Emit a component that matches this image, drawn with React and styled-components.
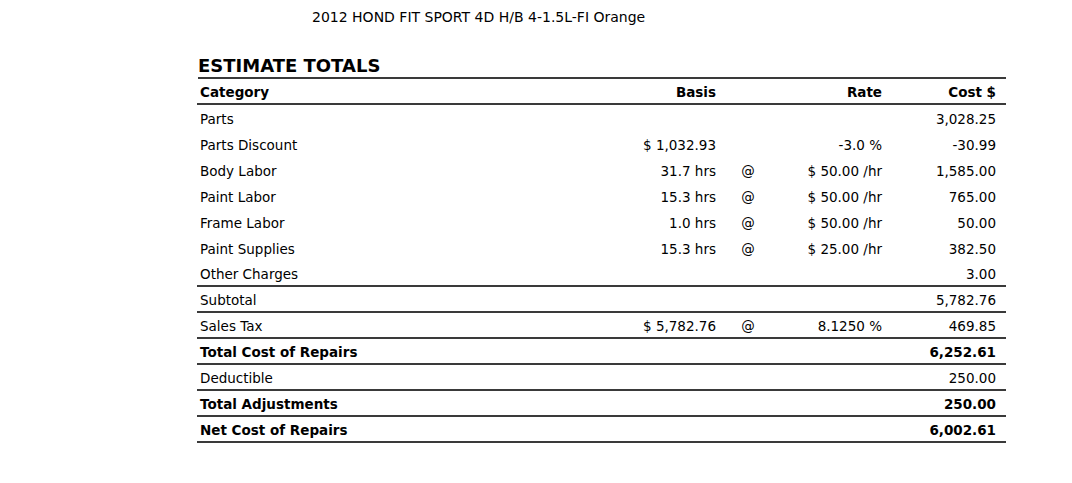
import React from "react";
import styled, { createGlobalStyle } from "styled-components";

const Global = createGlobalStyle`
  html, body { margin: 0; padding: 0; background: #fff; }
  body { font-family: "DejaVu Sans", Verdana, sans-serif; color: #000; }
`;

const Page = styled.div`
  width: 1072px;
  height: 483px;
  display: flex;
  flex-direction: column;
  background: #fff;
`;

const Vehicle = styled.div`
  margin: 9px 0 0 312px;
  font-size: 14px;
  line-height: 17px;
`;

const Section = styled.section`
  margin: 29px 0 0 197px;
  width: 809px;
`;

const Heading = styled.h2`
  margin: 0 0 0 1px;
  font-size: 18px;
  font-weight: bold;
  line-height: 22px;
  padding-bottom: 0;
  border-bottom: 2px solid #3a3a3a;
`;

const Row = styled.div`
  display: grid;
  grid-template-columns: 1fr 100px 64px 102px 114px 10px;
  align-items: center;
  height: 26px;
  padding-top: 2px;
  box-sizing: border-box;
  font-size: 13.5px;
  font-weight: ${(p) => (p.$bold ? "bold" : "normal")};
  border-bottom: ${(p) => (p.$line ? "2px solid #3a3a3a" : "0")};
`;

const Cell = styled.div`
  text-align: ${(p) => p.$align || "left"};
  padding-left: ${(p) => (p.$first ? "3px" : "0")};
  white-space: nowrap;
`;

const rows = [
  { c: "Parts", cost: "3,028.25" },
  { c: "Parts Discount", basis: "$ 1,032.93", rate: "-3.0 %", cost: "-30.99" },
  { c: "Body Labor", basis: "31.7 hrs", at: true, rate: "$ 50.00 /hr", cost: "1,585.00" },
  { c: "Paint Labor", basis: "15.3 hrs", at: true, rate: "$ 50.00 /hr", cost: "765.00" },
  { c: "Frame Labor", basis: "1.0 hrs", at: true, rate: "$ 50.00 /hr", cost: "50.00" },
  { c: "Paint Supplies", basis: "15.3 hrs", at: true, rate: "$ 25.00 /hr", cost: "382.50" },
  { c: "Other Charges", cost: "3.00", line: true },
  { c: "Subtotal", cost: "5,782.76", line: true },
  { c: "Sales Tax", basis: "$ 5,782.76", at: true, rate: "8.1250 %", cost: "469.85", line: true },
  { c: "Total Cost of Repairs", cost: "6,252.61", line: true, bold: true },
  { c: "Deductible", cost: "250.00", line: true },
  { c: "Total Adjustments", cost: "250.00", line: true, bold: true },
  { c: "Net Cost of Repairs", cost: "6,002.61", line: true, bold: true },
];

export default function App() {
  return (
    <Page>
      <Global />
      <Vehicle>2012 HOND FIT SPORT 4D H/B 4-1.5L-FI Orange</Vehicle>
      <Section>
        <Heading>ESTIMATE TOTALS</Heading>
        <Row $bold $line>
          <Cell $first>Category</Cell>
          <Cell $align="right">Basis</Cell>
          <Cell />
          <Cell $align="right">Rate</Cell>
          <Cell $align="right">Cost $</Cell>
          <Cell />
        </Row>
        {rows.map((r) => (
          <Row key={r.c} $bold={r.bold} $line={r.line}>
            <Cell $first>{r.c}</Cell>
            <Cell $align="right">{r.basis || ""}</Cell>
            <Cell $align="center">{r.at ? "@" : ""}</Cell>
            <Cell $align="right">{r.rate || ""}</Cell>
            <Cell $align="right">{r.cost}</Cell>
            <Cell />
          </Row>
        ))}
      </Section>
    </Page>
  );
}
